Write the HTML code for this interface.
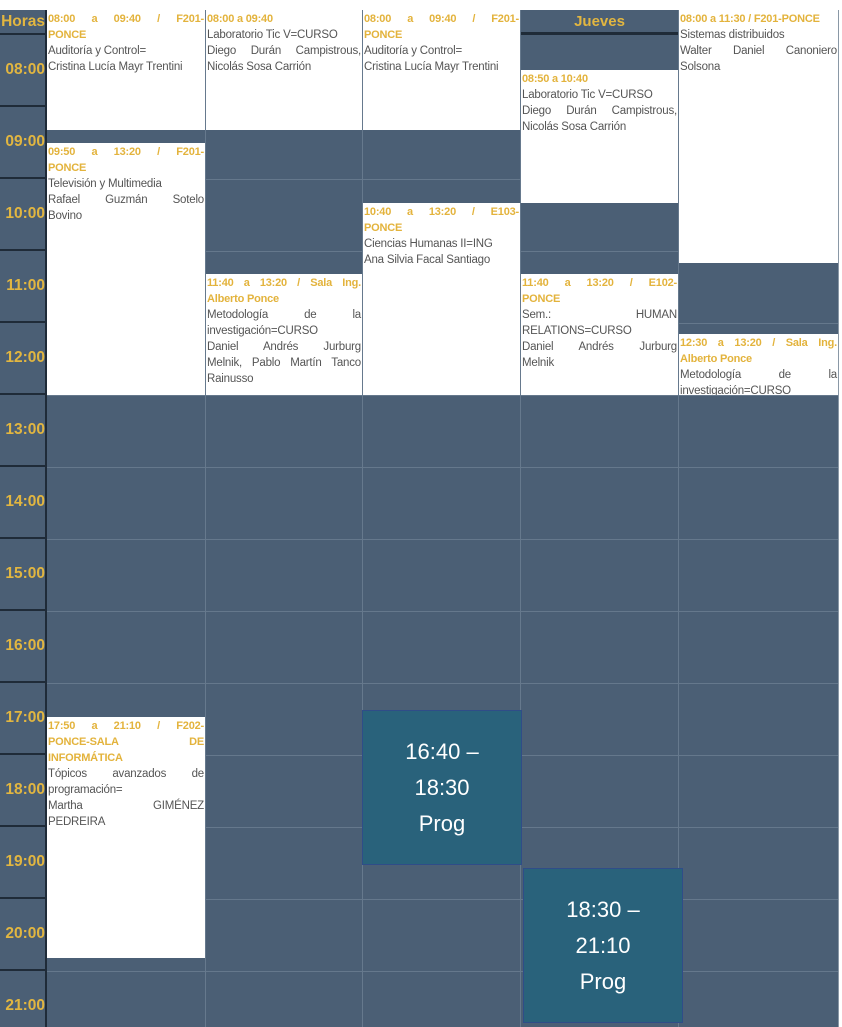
<!DOCTYPE html>
<html><head><meta charset="utf-8">
<style>
*{margin:0;padding:0;box-sizing:border-box}
html,body{width:842px;height:1027px;overflow:hidden}
body{background:#fff;position:relative;font-family:"Liberation Sans",Arial,sans-serif}
.bg{position:absolute;left:0;top:10px;width:839px;height:1017px;background:#4b5f75}
.hl{position:absolute;left:47px;width:792px;height:1px;background:#65788c}
.vl{position:absolute;top:10px;width:1px;height:1017px;background:#66798d}
.hc{position:absolute;left:0;width:45px;background:#4b5f75;border-bottom:2px solid #1f2b38;color:#e2b640;font-weight:bold;font-size:15.5px;overflow:hidden;white-space:nowrap;display:flex;justify-content:flex-end;align-items:center}
.hcol{position:absolute;left:45px;top:10px;width:2px;height:1017px;background:#1f2b38}
.ev{position:absolute;background:#fff;font-size:11.5px;line-height:16px;color:#555;padding:1px 1px 0 1px;overflow:hidden;letter-spacing:-0.2px}
.ev b{color:#e3b33c;font-weight:bold;font-size:11px}
.bx{position:absolute;background:#29627b;border:1px solid #2f4d88;color:#fff;font-size:22px;line-height:36px;text-align:center;display:flex;align-items:center;justify-content:center}
.j{text-align:justify;text-align-last:justify}
</style></head><body>
<div class="bg"></div>
<div class="hl" style="top:107px"></div><div class="hl" style="top:179px"></div><div class="hl" style="top:251px"></div><div class="hl" style="top:323px"></div><div class="hl" style="top:395px"></div><div class="hl" style="top:467px"></div><div class="hl" style="top:539px"></div><div class="hl" style="top:611px"></div><div class="hl" style="top:683px"></div><div class="hl" style="top:755px"></div><div class="hl" style="top:827px"></div><div class="hl" style="top:899px"></div><div class="hl" style="top:971px"></div>
<div class="vl" style="left:205px"></div><div class="vl" style="left:362px"></div><div class="vl" style="left:520px"></div><div class="vl" style="left:678px"></div><div class="vl" style="left:838px;background:#8a98a6"></div>
<div class="hc" style="top:10px;height:25px">Horas</div>
<div class="hc" style="top:35px;height:72px">08:00</div>
<div class="hc" style="top:107px;height:72px">09:00</div>
<div class="hc" style="top:179px;height:72px">10:00</div>
<div class="hc" style="top:251px;height:72px">11:00</div>
<div class="hc" style="top:323px;height:72px">12:00</div>
<div class="hc" style="top:395px;height:72px">13:00</div>
<div class="hc" style="top:467px;height:72px">14:00</div>
<div class="hc" style="top:539px;height:72px">15:00</div>
<div class="hc" style="top:611px;height:72px">16:00</div>
<div class="hc" style="top:683px;height:72px">17:00</div>
<div class="hc" style="top:755px;height:72px">18:00</div>
<div class="hc" style="top:827px;height:72px">19:00</div>
<div class="hc" style="top:899px;height:72px">20:00</div>
<div class="hc" style="top:971px;height:72px">21:00</div>
<div class="hcol"></div>

<div class="ev" style="left:47px;top:10px;width:158px;height:120px"><p class="j"><b>08:00 a 09:40 / F201-</b></p><b>PONCE</b><br>Auditoría y Control=<br>Cristina Lucía Mayr Trentini</div>
<div class="ev" style="left:47px;top:143px;width:158px;height:252px"><p class="j"><b>09:50 a 13:20 / F201-</b></p><b>PONCE</b><br>Televisión y Multimedia<p class="j">Rafael Guzmán Sotelo</p>Bovino</div>
<div class="ev" style="left:47px;top:717px;width:158px;height:241px"><p class="j"><b>17:50 a 21:10 / F202-</b></p><p class="j"><b>PONCE-SALA DE</b></p><b>INFORMÁTICA</b><p class="j">Tópicos avanzados de</p>programación=<p class="j">Martha GIMÉNEZ</p>PEDREIRA</div>
<div class="ev" style="left:206px;top:10px;width:156px;height:120px"><b>08:00 a 09:40</b><br>Laboratorio Tic V=CURSO<p class="j">Diego Durán Campistrous,</p>Nicolás Sosa Carrión</div>
<div class="ev" style="left:206px;top:274px;width:156px;height:121px"><p class="j"><b>11:40 a 13:20 / Sala Ing.</b></p><b>Alberto Ponce</b><p class="j">Metodología de la</p>investigación=CURSO<p class="j">Daniel Andrés Jurburg</p><p class="j">Melnik, Pablo Martín Tanco</p>Rainusso</div>
<div class="ev" style="left:363px;top:10px;width:157px;height:120px"><p class="j"><b>08:00 a 09:40 / F201-</b></p><b>PONCE</b><br>Auditoría y Control=<br>Cristina Lucía Mayr Trentini</div>
<div class="ev" style="left:363px;top:203px;width:157px;height:192px"><p class="j"><b>10:40 a 13:20 / E103-</b></p><b>PONCE</b><br>Ciencias Humanas II=ING<br>Ana Silvia Facal Santiago</div>
<div style="position:absolute;left:521px;top:10px;width:157px;height:25px;background:#4b5f75;border-bottom:3px solid #1f2b38;color:#e2b640;font-weight:bold;font-size:15px;text-align:center;line-height:23px">Jueves</div>
<div class="ev" style="left:521px;top:70px;width:157px;height:133px"><b>08:50 a 10:40</b><br>Laboratorio Tic V=CURSO<p class="j">Diego Durán Campistrous,</p>Nicolás Sosa Carrión</div>
<div class="ev" style="left:521px;top:274px;width:157px;height:121px"><p class="j"><b>11:40 a 13:20 / E102-</b></p><b>PONCE</b><p class="j">Sem.: HUMAN</p>RELATIONS=CURSO<p class="j">Daniel Andrés Jurburg</p>Melnik</div>
<div class="ev" style="left:679px;top:10px;width:159px;height:253px"><b>08:00 a 11:30 / F201-PONCE</b><br>Sistemas distribuidos<p class="j">Walter Daniel Canoniero</p>Solsona</div>
<div class="ev" style="left:679px;top:334px;width:159px;height:61px"><p class="j"><b>12:30 a 13:20 / Sala Ing.</b></p><b>Alberto Ponce</b><p class="j">Metodología de la</p>investigación=CURSO</div>

<div class="bx" style="left:362px;top:710px;width:160px;height:155px">16:40 –<br>18:30<br>Prog</div>
<div class="bx" style="left:523px;top:868px;width:160px;height:155px">18:30 –<br>21:10<br>Prog</div>
</body></html>
